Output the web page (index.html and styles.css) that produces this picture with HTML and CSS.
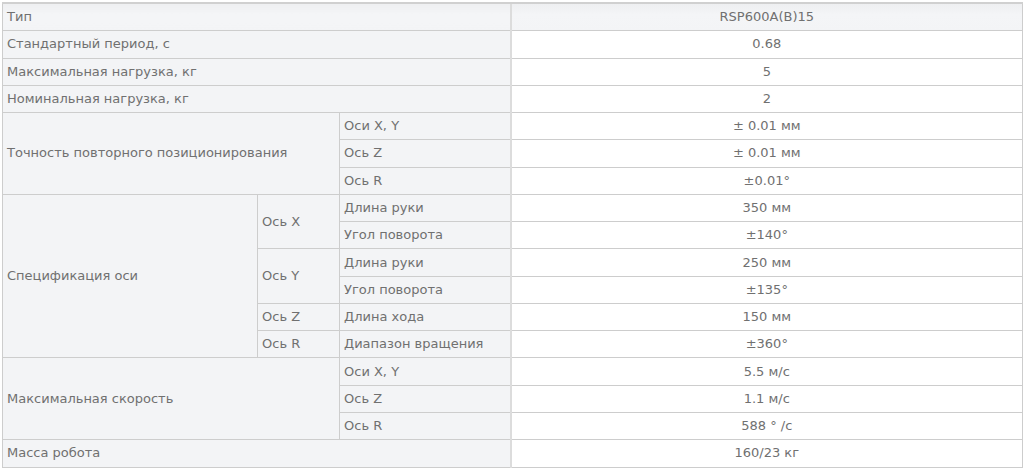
FILE: index.html
```html
<!DOCTYPE html>
<html lang="ru">
<head>
<meta charset="utf-8">
<title>Характеристики</title>
<link rel="stylesheet" href="styles.css">
</head>
<body>
<table class="spec">
  <colgroup>
    <col class="c1"><col class="c2"><col class="c3"><col class="c4">
  </colgroup>
  <tbody>
    <tr class="head"><td class="lbl" colspan="3">Тип</td><td class="val">RSP600A(B)15</td></tr>
    <tr><td class="lbl" colspan="3">Стандартный период, с</td><td class="val">0.68</td></tr>
    <tr><td class="lbl" colspan="3">Максимальная нагрузка, кг</td><td class="val">5</td></tr>
    <tr><td class="lbl" colspan="3">Номинальная нагрузка, кг</td><td class="val">2</td></tr>
    <tr><td class="lbl" colspan="2" rowspan="3">Точность повторного позиционирования</td><td class="lbl">Оси X, Y</td><td class="val">± 0.01 мм</td></tr>
    <tr><td class="lbl">Ось Z</td><td class="val">± 0.01 мм</td></tr>
    <tr><td class="lbl">Ось R</td><td class="val">±0.01°</td></tr>
    <tr><td class="lbl" rowspan="6">Спецификация оси</td><td class="lbl" rowspan="2">Ось X</td><td class="lbl">Длина руки</td><td class="val">350 мм</td></tr>
    <tr><td class="lbl">Угол поворота</td><td class="val">±140°</td></tr>
    <tr><td class="lbl" rowspan="2">Ось Y</td><td class="lbl">Длина руки</td><td class="val">250 мм</td></tr>
    <tr><td class="lbl">Угол поворота</td><td class="val">±135°</td></tr>
    <tr><td class="lbl">Ось Z</td><td class="lbl">Длина хода</td><td class="val">150 мм</td></tr>
    <tr><td class="lbl">Ось R</td><td class="lbl">Диапазон вращения</td><td class="val">±360°</td></tr>
    <tr><td class="lbl" colspan="2" rowspan="3">Максимальная скорость</td><td class="lbl">Оси X, Y</td><td class="val">5.5 м/с</td></tr>
    <tr><td class="lbl">Ось Z</td><td class="val">1.1 м/с</td></tr>
    <tr><td class="lbl">Ось R</td><td class="val">588 ° /с</td></tr>
    <tr><td class="lbl" colspan="3">Масса робота</td><td class="val">160/23 кг</td></tr>
  </tbody>
</table>
</body>
</html>
```
FILE: styles.css
```css
html, body {
  margin: 0;
  background: #ffffff;
}
body {
  padding: 2px 2px 0 2px;
  font-family: "DejaVu Sans", sans-serif;
  font-size: 13px;
  color: #707070;
}
.spec {
  width: 1020px;
  border-collapse: collapse;
  table-layout: fixed;
  border: 1px solid #c9c9c9;
}
.c1 { width: 255px; }
.c2 { width: 82px; }
.c3 { width: 171px; }
.c4 { width: 512px; }
.spec td {
  border: 1px solid #cdcdcd;
  height: 26.27px;
  padding: 0 4px;
  line-height: 16px;
  vertical-align: middle;
  white-space: nowrap;
}
.spec .lbl {
  background: #f3f4f6;
  text-align: left;
}
.spec .val {
  background: #ffffff;
  text-align: center;
  border-left: 2px solid #dcdcdc;
}
.spec .head td {
  background: linear-gradient(#eeeff1, #f4f5f7 40%, #f3f4f6);
  border-top: 2px solid #d0d0d0;
}
```
